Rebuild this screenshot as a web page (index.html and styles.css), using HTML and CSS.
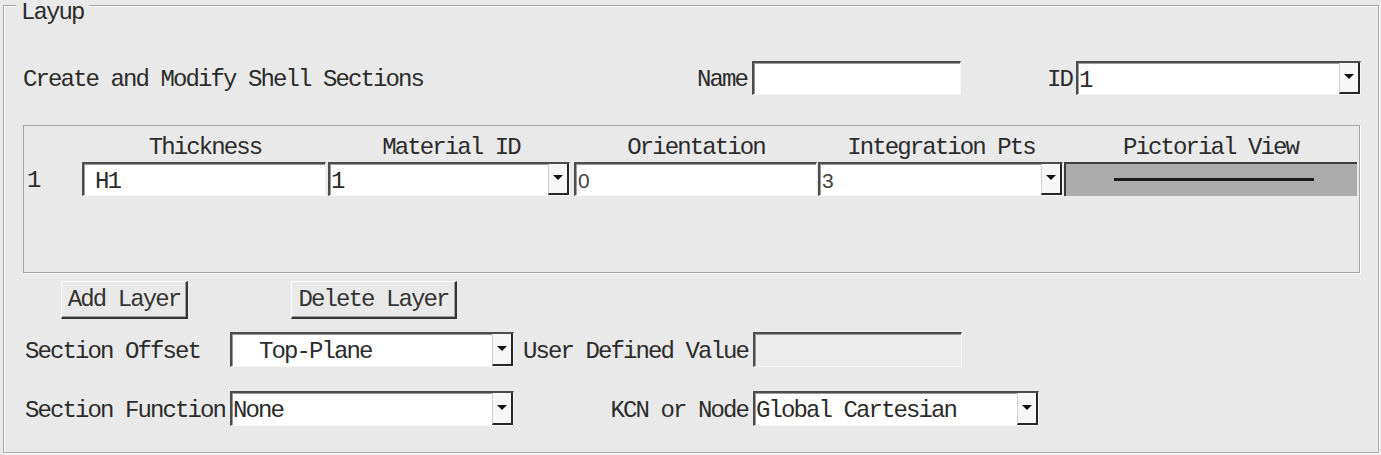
FILE: index.html
```html
<!DOCTYPE html>
<html>
<head>
<meta charset="utf-8">
<title>Layup</title>
<link rel="stylesheet" href="styles.css">
</head>
<body>
<div class="group">
  <div class="legend">Layup</div>

  <div class="row r1">
    <span class="title">Create and Modify Shell Sections</span>
    <span class="lbl">Name</span>
    <div class="field name-field"></div>
    <span class="lbl id-lbl">ID</span>
    <div class="field combo id-combo"><span class="val">1</span><span class="dd"></span></div>
  </div>

  <div class="table">
    <div class="grid thead">
      <span></span>
      <span class="hd">Thickness</span>
      <span class="hd">Material ID</span>
      <span class="hd">Orientation</span>
      <span class="hd">Integration Pts</span>
      <span class="hd">Pictorial View</span>
    </div>
    <div class="grid trow">
      <span class="rownum">1</span>
      <div class="field c-thick"><span class="val pad-h1">H1</span></div>
      <div class="field combo c-mat"><span class="val">1</span><span class="dd"></span></div>
      <div class="field c-orient"><span class="val sans">0</span></div>
      <div class="field combo c-integ"><span class="val sans">3</span><span class="dd"></span></div>
      <div class="pict"><span class="pline"></span></div>
    </div>
  </div>

  <div class="buttons">
    <div class="btn btn-add">Add Layer</div>
    <div class="btn btn-del">Delete Layer</div>
  </div>

  <div class="row r3">
    <span class="lbl left-lbl">Section Offset</span>
    <div class="field combo sec-combo"><span class="val pad-top">Top-Plane</span><span class="dd"></span></div>
    <span class="lbl udv-lbl">User Defined Value</span>
    <div class="field disabled udv-field"></div>
  </div>

  <div class="row r4">
    <span class="lbl left-lbl">Section Function</span>
    <div class="field combo sec-combo"><span class="val">None</span><span class="dd"></span></div>
    <span class="lbl kcn-lbl">KCN or Node</span>
    <div class="field combo kcn-combo"><span class="val">Global Cartesian</span><span class="dd"></span></div>
  </div>
</div>
</body>
</html>
```

FILE: styles.css
```css
html, body {
  margin: 0;
  padding: 0;
}

body {
  width: 1381px;
  height: 455px;
  overflow: hidden;
  background: #e9e9e9;
  font-family: "Liberation Mono", "DejaVu Sans Mono", monospace;
  font-size: 24px;
  letter-spacing: -1.9px;
  color: #2b2b2b;
  padding-top: 5px;
  box-sizing: border-box;
}

.group {
  position: relative;
  box-sizing: border-box;
  width: 1376px;
  height: 448px;
  margin-left: 3px;
  border: 1px solid #a6a6a6;
  box-shadow: inset 1px 1px 0 #ffffff, 1px 1px 0 #ffffff;
  padding-left: 19px;
  padding-top: 55px;
}

.legend {
  position: absolute;
  top: -4px;
  left: 12px;
  padding: 0 5px;
  background: #e9e9e9;
  line-height: 22px;
}

.row {
  display: flex;
  align-items: center;
  height: 34px;
}

.title {
  width: 674px;
  flex: none;
  padding-top: 3px;
}

.lbl {
  flex: none;
  white-space: pre;
  padding-top: 3px;
}

.field {
  box-sizing: border-box;
  height: 34px;
  background: #ffffff;
  border-style: solid;
  border-width: 2px 1px 1px 2px;
  border-color: #4c4c4c #f6f6f6 #f6f6f6 #4c4c4c;
  box-shadow: inset 1px 1px 0 #9a9a9a;
  display: flex;
  align-items: center;
  flex: none;
}

.field.disabled {
  background: #ececec;
}

.val {
  padding-left: 1px;
  padding-top: 3px;
  white-space: pre;
}

.sans {
  font-family: "Liberation Sans", Arial, sans-serif;
  font-size: 21px;
  letter-spacing: 0;
  color: #444;
  padding-left: 2px;
}

.pad-h1 {
  padding-left: 11px;
}

.pad-top {
  padding-left: 27px;
}

.combo .dd {
  margin-left: auto;
  box-sizing: border-box;
  width: 21px;
  height: 100%;
  background: #f7f7f7;
  border-left: 1px solid #d0d0d0;
  border-right: 2px solid #262626;
  border-bottom: 2px solid #262626;
  display: flex;
  align-items: center;
  justify-content: center;
}

.combo .dd::before {
  content: "";
  width: 0;
  height: 0;
  border-left: 5px solid transparent;
  border-right: 5px solid transparent;
  border-top: 5px solid #111;
  margin-top: -2px;
}

.name-field {
  width: 209px;
  margin-left: 5px;
}

.id-lbl {
  margin-left: 86px;
}

.id-combo {
  width: 285px;
  margin-left: 4px;
}

/* table */
.table {
  box-sizing: border-box;
  width: 1337px;
  height: 148px;
  margin-top: 30px;
  border: 1px solid #a6a6a6;
  box-shadow: 1px 1px 0 #ffffff;
}

.grid {
  display: grid;
  grid-template-columns: 58px 246px 246px 244px 246px 293px;
}

.thead {
  box-sizing: border-box;
  height: 36px;
  padding-top: 9px;
  line-height: 26px;
}

.hd {
  text-align: center;
  white-space: pre;
}

.trow {
  height: 34px;
  align-items: center;
}

.rownum {
  padding-left: 3px;
  padding-top: 3px;
}

.c-thick { width: 244px; }
.c-mat { width: 242px; }
.c-orient { width: 243px; }
.c-integ { width: 245px; }

.pict {
  box-sizing: border-box;
  width: 293px;
  height: 34px;
  background: #acacac;
  border-top: 2px solid #3c3c3c;
  border-left: 2px solid #3c3c3c;
  display: flex;
  align-items: center;
  justify-content: center;
}

.pline {
  display: block;
  width: 200px;
  height: 3px;
  margin-left: 4px;
  margin-top: -2px;
  background: #1c1c1c;
}

/* buttons */
.buttons {
  display: flex;
  margin-top: 8px;
  padding-left: 38px;
  height: 38px;
}

.btn {
  box-sizing: border-box;
  height: 38px;
  display: flex;
  align-items: center;
  justify-content: center;
  background: #e9e9e9;
  border-style: solid;
  border-width: 1px 2px 2px 1px;
  border-color: #ffffff #353535 #353535 #ffffff;
  box-shadow: inset -1px -1px 0 #a0a0a0;
  white-space: pre;
  color: #333;
}

.btn-add { width: 127px; }
.btn-del { width: 166px; margin-left: 103px; }

/* bottom rows */
.r3 {
  margin-top: 13px;
  height: 35px;
}

.r4 {
  margin-top: 24px;
  height: 35px;
}

.r3 .field, .r4 .field {
  height: 35px;
}

.left-lbl {
  width: 207px;
  padding-left: 2px;
  box-sizing: border-box;
}

.sec-combo {
  width: 284px;
}

.udv-lbl {
  margin-left: 9px;
}

.udv-field {
  width: 209px;
  margin-left: 5px;
}

.kcn-lbl {
  width: 234px;
  text-align: right;
}

.kcn-combo {
  width: 286px;
  margin-left: 5px;
}
```
